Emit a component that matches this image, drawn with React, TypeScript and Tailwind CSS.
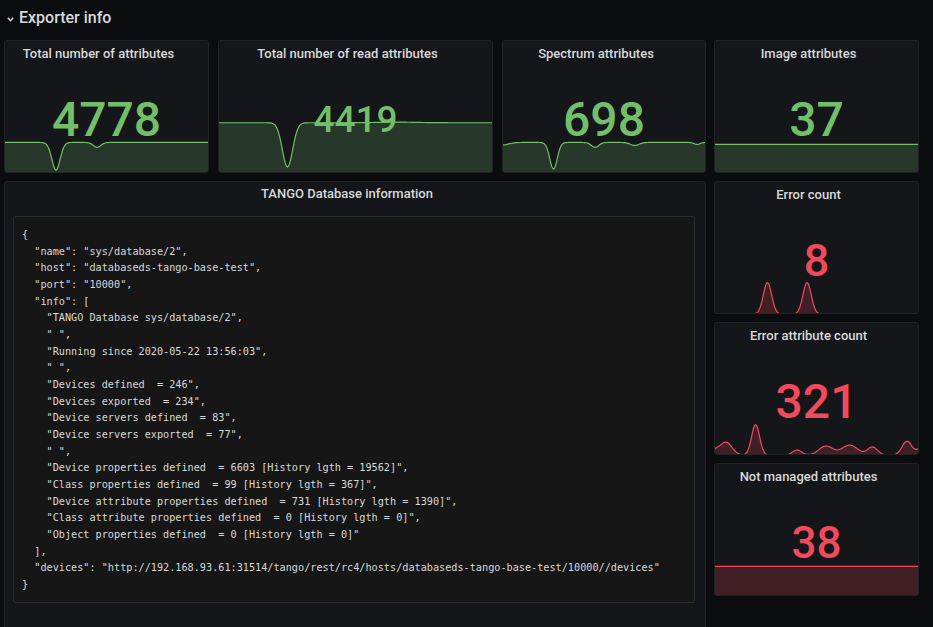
import React from 'react'

type Bump = [number, number, number] // centre, amplitude, sigma

const H = 133

// sample baseline + gaussian bumps every px, for the sparklines
function series(w: number, base: number, bumps: Bump[]) {
  let d = ''
  for (let x = 0; x <= w; x += 1) {
    let y = base
    for (const [c, a, s] of bumps) y += a * Math.exp(-((x - c) ** 2) / (2 * s * s))
    d += `${x === 0 ? 'M' : ' L'}${x},${y.toFixed(2)}`
  }
  return d
}

function Sparkline({ w, base, bumps, color }: { w: number; base: number; bumps: Bump[]; color: string }) {
  const line = series(w, base, bumps)
  const area = `${line} L${w},${H + 2} L0,${H + 2} Z`
  return (
    <svg className="absolute inset-0 h-full w-full" viewBox={`0 0 ${w} ${H}`} preserveAspectRatio="none">
      <path d={area} fill={color} fillOpacity={0.2} />
      <path d={line} fill="none" stroke={color} strokeWidth={1.2} vectorEffect="non-scaling-stroke" />
    </svg>
  )
}

function Stat({
  title,
  value,
  size,
  w,
  red,
  base,
  bumps,
  className,
}: {
  title: string
  value: string
  size: string
  w: number
  red?: boolean
  base: number
  bumps: Bump[]
  className: string
}) {
  const color = red ? '#f2495c' : '#73bf69'
  return (
    <div
      className={`relative flex h-[133px] shrink-0 flex-col overflow-hidden rounded-[3px] border border-[#202226] bg-[#141619] ${className}`}
    >
      <Sparkline w={w} base={base} bumps={bumps} color={color} />
      <div className="relative z-10 flex h-[26px] shrink-0 items-center justify-center pl-2 pr-6 text-[13px] font-medium text-[#d8d9da]">
        {title}
      </div>
      <div
        className={`relative z-10 flex flex-1 items-center justify-center font-medium leading-none ${size} ${red ? 'text-[#f2495c]' : 'text-[#73bf69]'}`}
      >
        {value}
      </div>
    </div>
  )
}

const code = `{
  "name": "sys/database/2",
  "host": "databaseds-tango-base-test",
  "port": "10000",
  "info": [
    "TANGO Database sys/database/2",
    " ",
    "Running since 2020-05-22 13:56:03",
    " ",
    "Devices defined  = 246",
    "Devices exported  = 234",
    "Device servers defined  = 83",
    "Device servers exported  = 77",
    " ",
    "Device properties defined  = 6603 [History lgth = 19562]",
    "Class properties defined  = 99 [History lgth = 367]",
    "Device attribute properties defined  = 731 [History lgth = 1390]",
    "Class attribute properties defined  = 0 [History lgth = 0]",
    "Object properties defined  = 0 [History lgth = 0]"
  ],
  "devices": "http://192.168.93.61:31514/tango/rest/rc4/hosts/databaseds-tango-base-test/10000//devices"
}`

export default function App() {
  return (
    <div className="h-[627px] w-[933px] overflow-hidden bg-[#0b0c0e] font-['Roboto',sans-serif]">
      {/* row header */}
      <div className="flex h-[36px] items-center gap-[5px] pl-[7px] text-[16px] font-medium text-[#d8d9da]">
        <svg width="7" height="5" viewBox="0 0 7 5" className="mt-[2px]">
          <polyline points="0.8,0.8 3.5,3.8 6.2,0.8" fill="none" stroke="#d8d9da" strokeWidth="1.4" />
        </svg>
        <span>Exporter info</span>
      </div>

      {/* top stats */}
      <div className="mt-[4px] flex pl-[4px]">
        <Stat
          title="Total number of attributes"
          value="4778"
          size="text-[48px]"
          w={205}
          base={103}
          bumps={[[51.5, 28, 4.2], [93, 5, 3.8]]}
          className="w-[205px]"
        />
        <Stat
          title="Total number of read attributes"
          value="4419"
          size="text-[37px]"
          w={275}
          base={83}
          bumps={[[69, 45, 5.2], [180, -0.6, 20]]}
          className="ml-[9px] w-[275px]"
        />
        <Stat
          title="Spectrum attributes"
          value="698"
          size="text-[48px]"
          w={204}
          base={103}
          bumps={[[0, 2.5, 6], [51, 27, 3.8], [93, 5, 3.8], [133, 3, 4.5], [196, 2, 3]]}
          className="ml-[9px] w-[204px]"
        />
        <Stat
          title="Image attributes"
          value="37"
          size="text-[48px]"
          w={205}
          base={105}
          bumps={[]}
          className="ml-[8px] w-[205px]"
        />
      </div>

      <div className="mt-[8px] flex gap-[8px] pl-[4px]">
        {/* text panel */}
        <div className="flex h-[470px] w-[702px] shrink-0 flex-col rounded-[3px] border border-[#202226] bg-[#141619]">
          <div className="flex h-[24px] shrink-0 items-center justify-center pl-2 pr-6 text-[13px] font-medium text-[#d8d9da]">
            TANGO Database information
          </div>
          <pre className="ml-[8px] mr-[10px] mt-[10px] h-[387px] rounded-[3px] border border-[#2c2c2f] bg-[#161616] px-[8px] pt-[10px] font-['DejaVu_Sans_Mono',monospace] text-[10.2px] leading-[16.67px] whitespace-pre text-[#d8d9da]">
            {code}
          </pre>
        </div>

        {/* right column */}
        <div className="flex w-[205px] flex-col gap-[8px]">
          <Stat
            title="Error count"
            value="8"
            size="text-[45px]"
            w={205}
            red
            base={134}
            bumps={[[53, -32, 4.2], [93, -32, 4.2]]}
            className="w-[205px]"
          />
          <Stat
            title="Error attribute count"
            value="321"
            size="text-[48px]"
            w={205}
            red
            base={134}
            bumps={[
              [0, -4, 4], [11, -13, 6], [41, -31, 4], [83, -5, 4.5], [112, -9, 7],
              [136, -10, 8], [159, -8, 5], [194, -14, 5], [206, -5, 3],
            ]}
            className="w-[205px]"
          />
          <Stat
            title="Not managed attributes"
            value="38"
            size="text-[44px]"
            w={205}
            red
            base={104}
            bumps={[]}
            className="w-[205px]"
          />
        </div>
      </div>
    </div>
  )
}
